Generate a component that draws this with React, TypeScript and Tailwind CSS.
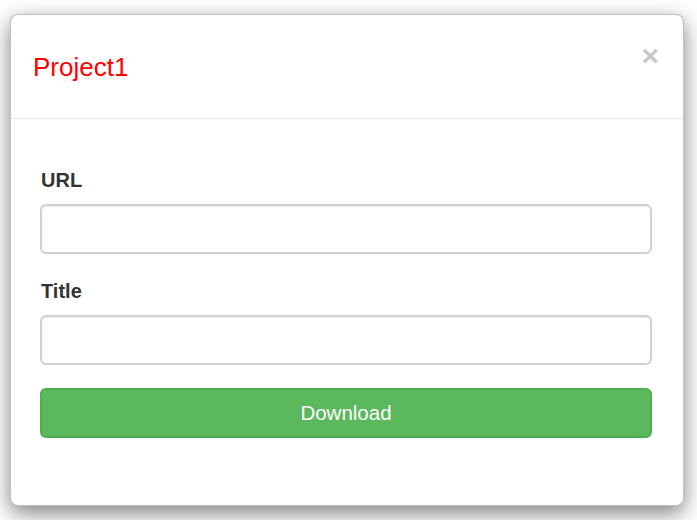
export default function App() {
  return (
    <div
      className="w-[697px] h-[520px] bg-white pl-[10px] pt-[14px]"
      style={{ fontFamily: '"Liberation Sans", Arial, sans-serif' }}
    >
      <div className="relative w-[674px] h-[492px] bg-white border border-[rgba(0,0,0,0.25)] rounded-[8px] shadow-[0_7px_21px_rgba(0,0,0,0.5)]">
        <div className="h-[104px] flex items-center pl-[22px] border-b border-[#e5e5e5]">
          <h4 className="text-[26px] leading-[26px] text-[#ff0000] font-normal">Project1</h4>
        </div>
        <button className="absolute top-[26px] right-[24px] text-[30px] leading-none font-bold text-[#c8c8c8]">
          ×
        </button>
        <div className="pl-[29px] pr-[31px] pt-[51px]">
          <label className="block pl-[1px] text-[20px] leading-[20px] font-bold text-[#333]">URL</label>
          <input className="mt-[14px] block w-full h-[50px] border-2 border-[#d0d0d0] rounded-[6px] shadow-[inset_0_1px_1px_rgba(0,0,0,0.075)] outline-none" />
          <label className="mt-[27px] block pl-[1px] text-[20px] leading-[20px] font-bold text-[#333]">Title</label>
          <input className="mt-[14px] block w-full h-[50px] border-2 border-[#d0d0d0] rounded-[6px] shadow-[inset_0_1px_1px_rgba(0,0,0,0.075)] outline-none" />
          <button className="mt-[23px] block w-full h-[50px] bg-[#5cb85c] border-2 border-[#4cae4c] rounded-[6px] text-white text-[20.5px] leading-none">
            Download
          </button>
        </div>
      </div>
    </div>
  );
}
